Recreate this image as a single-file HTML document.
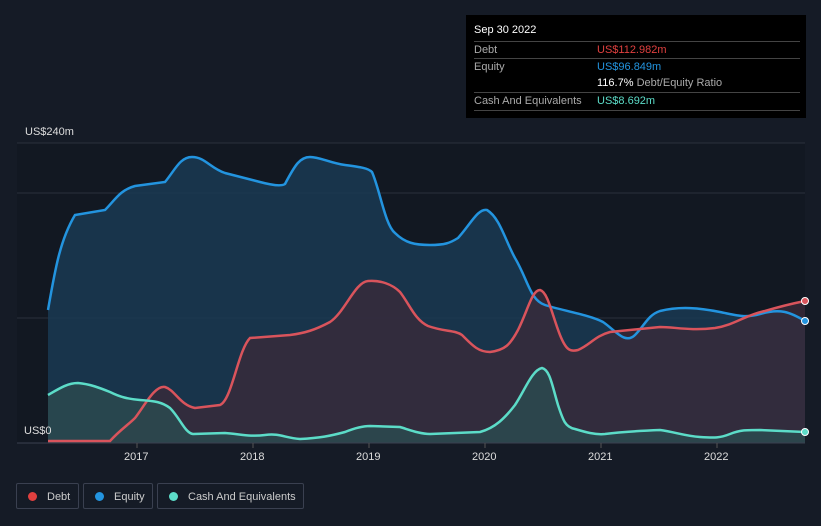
<!DOCTYPE html>
<html><head><meta charset="utf-8"><style>
body{margin:0;width:821px;height:526px;background:#151b26;font-family:"Liberation Sans",sans-serif;overflow:hidden;position:relative}
.tt{position:absolute;left:466px;top:15px;width:340px;height:103px;background:#000;color:#fff;font-size:11px}
.tt .r{position:absolute;left:8px;right:6px;border-top:1px solid #444;height:17px;line-height:17px}
.lbl{color:#aaa}
.leg{position:absolute;top:483px;height:26px;border:1px solid #3a4050;border-radius:2px;color:#ccc;font-size:11px;line-height:26px;box-sizing:border-box}
.dot{display:inline-block;width:9px;height:9px;border-radius:50%;margin:0 10px 0 11px;vertical-align:-1px}
.ax{position:absolute;color:#ddd;font-size:11px}
</style></head><body>
<svg width="821" height="526" style="position:absolute;left:0;top:0">
<defs>
<path id="eq" d="M48,310 C55,270 60,240 75,215 L105,210 C115,200 120,190 135,186 L165,182 C175,170 180,157 192,157 C205,157 210,168 225,173 L260,182 C275,186 282,186 285,184 C295,165 300,157 310,157 C320,157 330,163 345,165 C360,167 368,168 372,172 C380,190 385,225 395,233 C405,243 415,245 430,245 C445,245 450,243 458,238 C470,225 478,208 487,210 C500,218 505,240 515,258 C528,280 530,300 545,305 C560,310 590,315 603,322 C615,330 625,345 635,335 C645,325 648,315 660,311 C680,306 700,308 720,312 C740,316 745,318 760,314 C780,308 790,312 805,321"/>
<path id="de" d="M48,441 L110,441 C120,430 128,425 135,418 C145,405 155,385 165,387 C175,390 180,405 195,408 L220,405 C232,400 238,350 250,338 L290,335 C305,333 315,330 330,322 C345,312 355,282 368,281 C380,280 392,284 400,292 C410,305 415,320 428,326 C445,332 455,330 462,335 C472,345 478,352 490,352 C505,350 510,345 518,330 C528,310 532,290 540,290 C548,292 552,315 560,335 C566,350 570,352 578,350 C590,345 595,336 610,332 L660,327 C675,327 690,331 715,328 C735,325 745,315 765,311 C785,305 795,303 805,301"/>
<path id="ca" d="M48,395 C60,388 68,383 78,383 C90,384 100,388 110,392 C120,397 128,399 140,400 C155,401 162,402 170,408 C180,418 185,433 193,434 L225,433 C240,434 250,437 265,435 C280,433 285,438 300,439 C320,438 330,436 345,432 C355,428 362,426 370,426 L400,427 C410,430 420,434 430,434 L480,432 C495,428 505,418 515,405 C525,390 532,370 542,368 C550,370 552,385 558,405 C563,420 565,427 575,429 C585,432 595,435 605,434 C620,432 635,431 660,430 C675,432 685,436 700,437 C715,438 720,438 730,434 C740,430 745,430 760,430 L805,432"/>
</defs>
<rect x="17" y="143" width="788" height="300" fill="#121822"/>
<line x1="17" y1="143" x2="805" y2="143" stroke="#2a303c"/>
<line x1="17" y1="193" x2="805" y2="193" stroke="#2a303c"/>
<line x1="17" y1="318" x2="805" y2="318" stroke="#2a303c"/>
<path d="M48,310 C55,270 60,240 75,215 L105,210 C115,200 120,190 135,186 L165,182 C175,170 180,157 192,157 C205,157 210,168 225,173 L260,182 C275,186 282,186 285,184 C295,165 300,157 310,157 C320,157 330,163 345,165 C360,167 368,168 372,172 C380,190 385,225 395,233 C405,243 415,245 430,245 C445,245 450,243 458,238 C470,225 478,208 487,210 C500,218 505,240 515,258 C528,280 530,300 545,305 C560,310 590,315 603,322 C615,330 625,345 635,335 C645,325 648,315 660,311 C680,306 700,308 720,312 C740,316 745,318 760,314 C780,308 790,312 805,321 L805,443 L48,443Z" fill="#1a3a52" fill-opacity="0.85"/>
<path d="M48,441 L110,441 C120,430 128,425 135,418 C145,405 155,385 165,387 C175,390 180,405 195,408 L220,405 C232,400 238,350 250,338 L290,335 C305,333 315,330 330,322 C345,312 355,282 368,281 C380,280 392,284 400,292 C410,305 415,320 428,326 C445,332 455,330 462,335 C472,345 478,352 490,352 C505,350 510,345 518,330 C528,310 532,290 540,290 C548,292 552,315 560,335 C566,350 570,352 578,350 C590,345 595,336 610,332 L660,327 C675,327 690,331 715,328 C735,325 745,315 765,311 C785,305 795,303 805,301 L805,443 L48,443Z" fill="#3a2a3a" fill-opacity="0.8"/>
<path d="M48,395 C60,388 68,383 78,383 C90,384 100,388 110,392 C120,397 128,399 140,400 C155,401 162,402 170,408 C180,418 185,433 193,434 L225,433 C240,434 250,437 265,435 C280,433 285,438 300,439 C320,438 330,436 345,432 C355,428 362,426 370,426 L400,427 C410,430 420,434 430,434 L480,432 C495,428 505,418 515,405 C525,390 532,370 542,368 C550,370 552,385 558,405 C563,420 565,427 575,429 C585,432 595,435 605,434 C620,432 635,431 660,430 C675,432 685,436 700,437 C715,438 720,438 730,434 C740,430 745,430 760,430 L805,432 L805,443 L48,443Z" fill="#2b4a4f" fill-opacity="0.85"/>
<use href="#eq" fill="none" stroke="#2394df" stroke-width="2.5"/>
<use href="#de" fill="none" stroke="#d9545c" stroke-width="2.5"/>
<use href="#ca" fill="none" stroke="#5cdcc8" stroke-width="2.5"/>
<line x1="17" y1="443" x2="805" y2="443" stroke="#3a4050"/>
<g stroke="#555"><line x1="137" y1="443" x2="137" y2="448"/><line x1="253" y1="443" x2="253" y2="448"/><line x1="369" y1="443" x2="369" y2="448"/><line x1="485" y1="443" x2="485" y2="448"/><line x1="601" y1="443" x2="601" y2="448"/><line x1="717" y1="443" x2="717" y2="448"/></g>
<circle cx="805" cy="301" r="3.5" fill="#d9545c" stroke="#fff" stroke-width="1"/>
<circle cx="805" cy="321" r="3.5" fill="#2394df" stroke="#fff" stroke-width="1"/>
<circle cx="805" cy="432" r="3.5" fill="#5cdcc8" stroke="#fff" stroke-width="1"/>
</svg>
<div class="ax" style="left:25px;top:126px">US$240m</div>
<div class="ax" style="left:24px;top:425px">US$0</div>
<div class="ax" style="left:124px;top:451px">2017</div>
<div class="ax" style="left:240px;top:451px">2018</div>
<div class="ax" style="left:356px;top:451px">2019</div>
<div class="ax" style="left:472px;top:451px">2020</div>
<div class="ax" style="left:588px;top:451px">2021</div>
<div class="ax" style="left:704px;top:451px">2022</div>
<div class="tt">
<div style="position:absolute;left:8px;top:9px">Sep 30 2022</div>
<div class="r" style="top:26px"><span class="lbl">Debt</span><span style="position:absolute;left:123px;color:#e0403f">US$112.982m</span></div>
<div class="r" style="top:43px"><span class="lbl">Equity</span><span style="position:absolute;left:123px;color:#2394df">US$96.849m</span></div>
<div class="r" style="top:60px;border:none"><span style="position:absolute;left:123px">116.7% <span class="lbl">Debt/Equity Ratio</span></span></div>
<div class="r" style="top:77px"><span class="lbl">Cash And Equivalents</span><span style="position:absolute;left:123px;color:#5cdcc8">US$8.692m</span></div>
<div class="r" style="top:95px;height:0"></div>
</div>
<div class="leg" style="left:16px;width:63px"><span class="dot" style="background:#e0403f"></span>Debt</div>
<div class="leg" style="left:83px;width:70px"><span class="dot" style="background:#2394df"></span>Equity</div>
<div class="leg" style="left:157px;width:147px"><span class="dot" style="background:#5cdcc8"></span>Cash And Equivalents</div>
</body></html>
